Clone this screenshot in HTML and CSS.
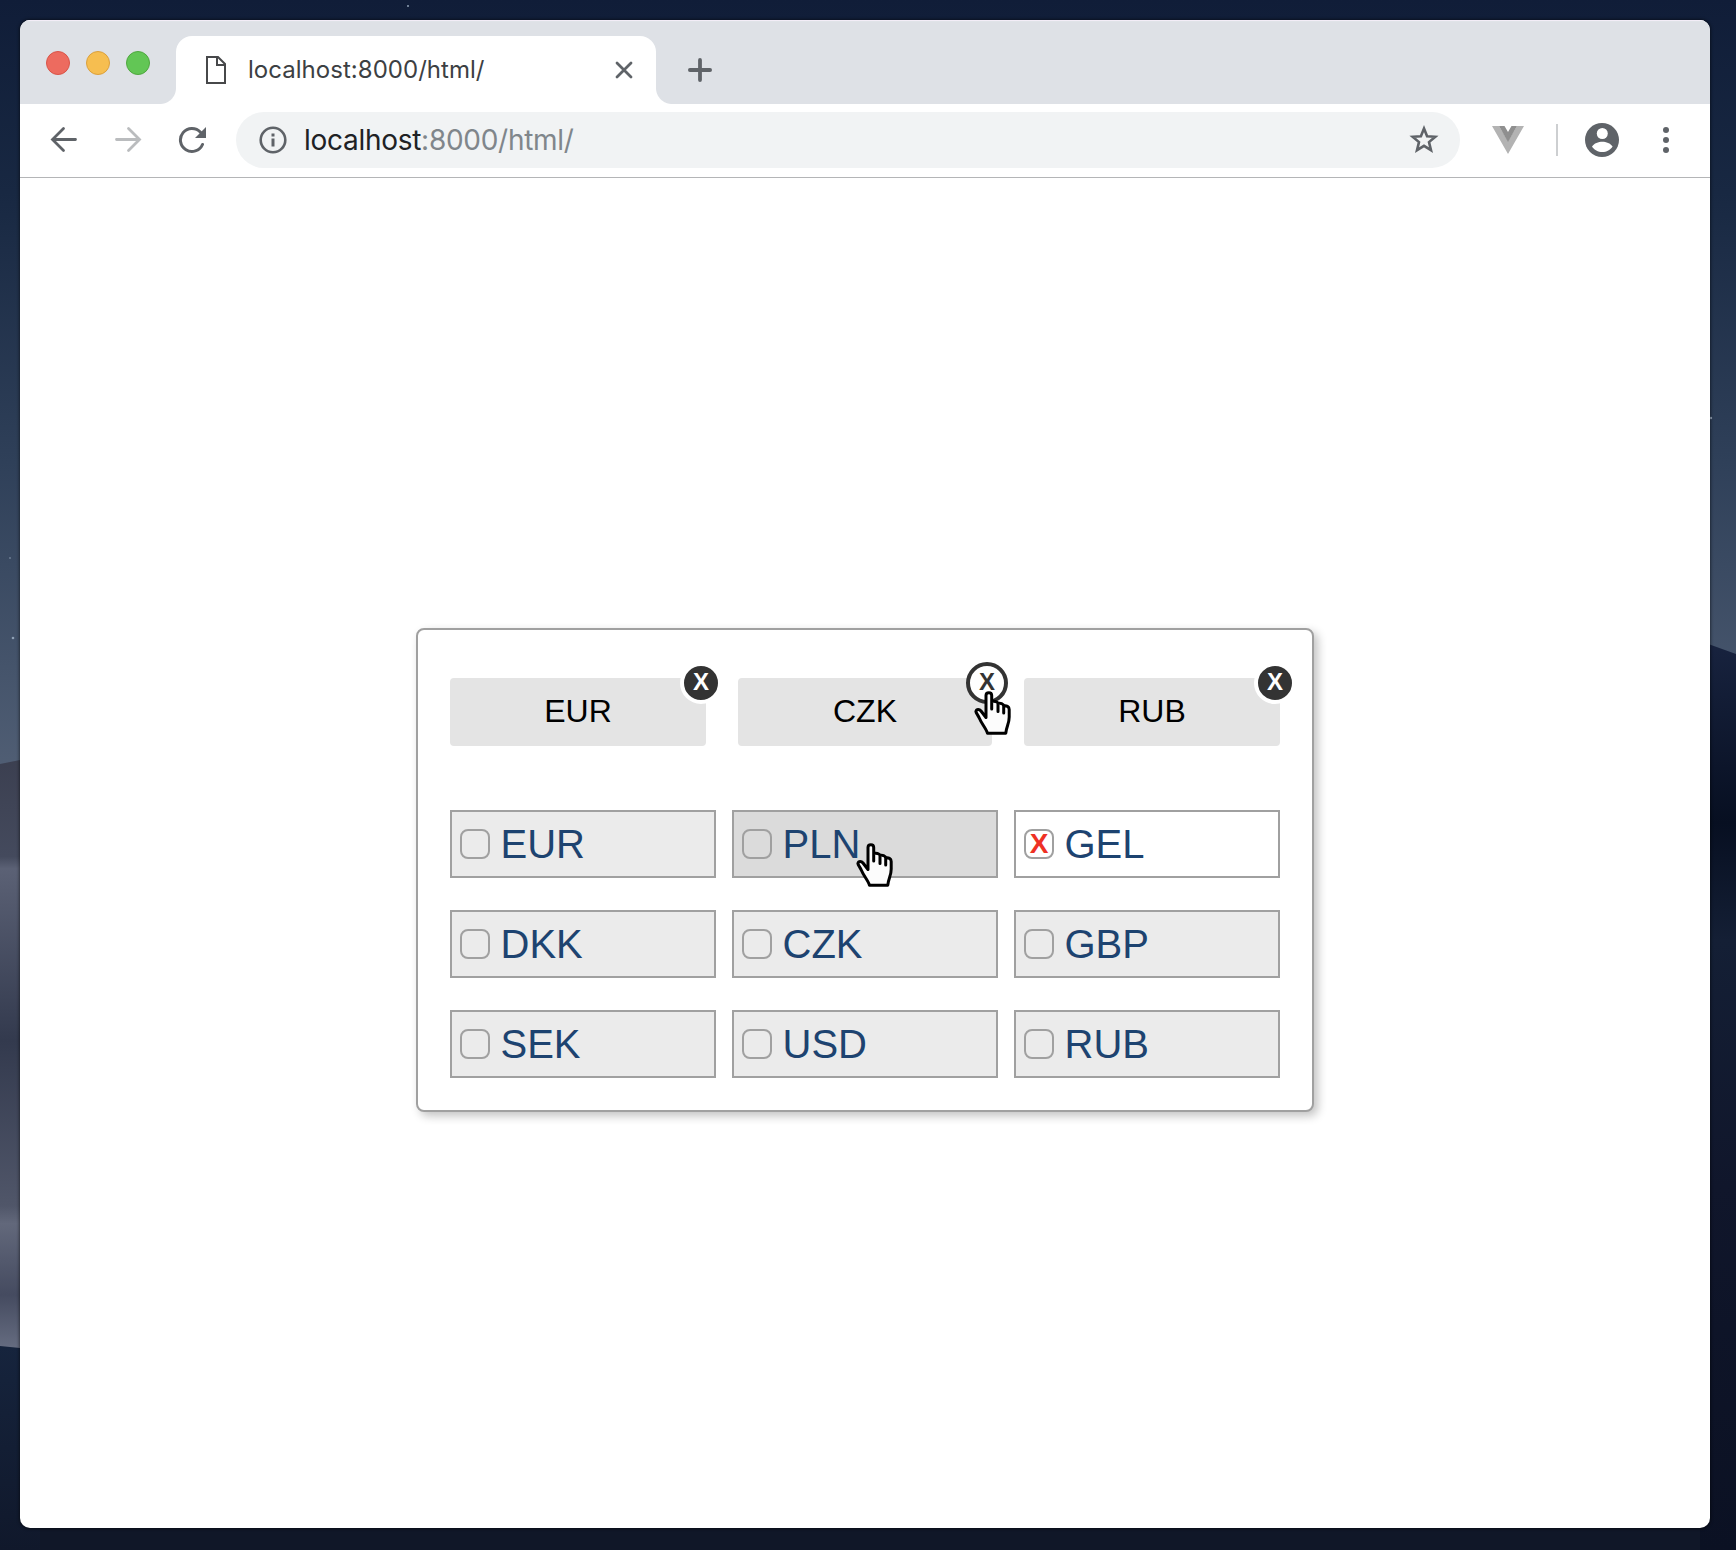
FILE: index.html
```html
<!DOCTYPE html>
<html lang="en">
<head>
<meta charset="utf-8">
<title>localhost:8000/html/</title>
<link rel="stylesheet" href="styles.css">
</head>
<body>
<svg class="wallpaper" viewBox="0 0 1736 1550" preserveAspectRatio="none" aria-hidden="true">
  <defs>
    <linearGradient id="sky" x1="0" y1="0" x2="0" y2="1">
      <stop offset="0" stop-color="#101d38"/><stop offset=".25" stop-color="#182842"/>
      <stop offset=".6" stop-color="#2f4059"/><stop offset="1" stop-color="#505e74"/>
    </linearGradient>
    <linearGradient id="dune" x1="0" y1="0" x2="0" y2="1">
      <stop offset="0" stop-color="#3b3f50"/><stop offset=".17" stop-color="#444a5d"/>
      <stop offset=".19" stop-color="#5b6175"/><stop offset=".48" stop-color="#333a4e"/>
      <stop offset=".76" stop-color="#505669"/><stop offset=".79" stop-color="#62687b"/>
      <stop offset=".91" stop-color="#454b60"/><stop offset="1" stop-color="#656c80"/>
    </linearGradient>
    <linearGradient id="shade" x1="0" y1="0" x2="0" y2="1">
      <stop offset="0" stop-color="#18233f"/><stop offset=".2" stop-color="#070f21"/>
      <stop offset=".33" stop-color="#141f35"/><stop offset=".6" stop-color="#10162b"/>
      <stop offset="1" stop-color="#0b1123"/>
    </linearGradient>
    <linearGradient id="sand" x1="0" y1="0" x2="0" y2="1">
      <stop offset="0" stop-color="#16243d"/><stop offset="1" stop-color="#10182b"/>
    </linearGradient>
  </defs>
  <rect width="1736" height="1550" fill="#101728"/>
  <rect width="1736" height="770" fill="url(#sky)"/>
  <path d="M0 764L40 756V1348H0Z" fill="url(#dune)"/>
  <path d="M0 1346L40 1350V1550H0Z" fill="url(#sand)"/>
  <path d="M1700 641L1736 654V1550H1700Z" fill="url(#shade)"/>
  <g fill="#8fa0b5"><circle cx="408" cy="6" r="1"/><circle cx="13" cy="638" r="1.3"/><circle cx="1711" cy="418" r="1.2"/><circle cx="10" cy="558" r=".8"/></g>
</svg>
<div class="window">
  <div class="tabstrip">
    <div class="lights"><i class="light red"></i><i class="light yellow"></i><i class="light green"></i></div>
    <div class="tab">
      <svg class="doc" width="20" height="28" viewBox="0 0 20 28"><path d="M1 1H12L19 8V27H1ZM11 1V9H19" fill="none" stroke="#47484a" stroke-width="2"/></svg>
      <span class="tab-title">localhost:8000/html/</span>
      <svg class="tab-close" width="18" height="18" viewBox="0 0 18 18"><path d="M2 2L16 16M16 2L2 16" stroke="#5f6368" stroke-width="2.8" stroke-linecap="round"/></svg>
    </div>
    <svg class="new-tab" width="24" height="24" viewBox="0 0 24 24"><path d="M12 1.9V22.1M1.9 12H22.1" stroke="#5f6368" stroke-width="3.8" stroke-linecap="round"/></svg>
  </div>
  <div class="toolbar">
    <svg class="nav" width="28" height="28" viewBox="0 0 28 28"><path d="M25.500 13.500H3M13.500 2.500L2.500 13.500L13.500 24.500" fill="none" stroke="#5f6368" stroke-width="2.800" stroke-linecap="round"/></svg>
    <svg class="nav" width="28" height="28" viewBox="0 0 28 28"><path d="M2.500 13.500H25M14.500 2.500L25.500 13.500L14.500 24.500" fill="none" stroke="#babcbe" stroke-width="2.800" stroke-linecap="round"/></svg>
    <svg class="nav" width="28" height="28" viewBox="0 0 28 28"><path d="M24.500 18.500A11.500 11.500 0 1 1 22.500 6.300" fill="none" stroke="#5f6368" stroke-width="3" stroke-linecap="round"/><path d="M28 1V12H17Z" fill="#5f6368"/></svg>
    <div class="omnibox">
      <svg width="28" height="28" viewBox="0 0 28 28"><circle cx="14" cy="14" r="12.300" fill="none" stroke="#5f6368" stroke-width="2.600"/><path d="M12.500 7.500h3v3h-3zM12.500 12.500h3v8h-3z" fill="#5f6368"/></svg>
      <span class="url"><b>localhost</b>:8000/html/</span>
      <svg class="star" width="30" height="30" viewBox="0 0 30 30"><path d="M15 3.500L18.100 11.200L26.300 11.800L20 17.100L22 25.200L15 20.900L8 25.200L10 17.100L3.700 11.800L11.900 11.200Z" fill="none" stroke="#5f6368" stroke-width="2.600"/></svg>
    </div>
    <svg class="vue" width="32" height="28" viewBox="0 0 32 28"><path d="M0 0H7L16 15L25 0H32L16 28Z" fill="#b3b3b3"/><path d="M7 0H12.500L16 6L19.500 0H25L16 16Z" fill="#8f8f8f"/></svg>
    <span class="divider"></span>
    <svg class="avatar" width="34" height="34" viewBox="0 0 34 34"><circle cx="17" cy="17" r="17" fill="#5f6368"/><circle cx="17.300" cy="10.500" r="5.500" fill="#fff"/><path d="M7 23.500C9 20.200 13.500 18.700 17.300 18.700S25.500 20.200 27.600 23.500C25.500 27 21.500 29 17.300 29S9 27 7 23.500Z" fill="#fff"/></svg>
    <svg class="menu" width="6" height="26" viewBox="0 0 6 26"><g fill="#5f6368"><circle cx="3" cy="3" r="3"/><circle cx="3" cy="13" r="3"/><circle cx="3" cy="23" r="3"/></g></svg>
  </div>
  <main class="page">
    <section class="panel">
      <div class="pills">
        <div class="pill">EUR<span class="remove">X</span></div>
        <div class="pill">CZK<span class="remove hover">X</span>
          <svg class="hand" width="37" height="44" viewBox="0 0 37 44"><use href="#hand"/></svg>
        </div>
        <div class="pill">RUB<span class="remove">X</span></div>
      </div>
      <div class="options">
        <div class="option"><i class="box"></i>EUR</div>
        <div class="option active"><i class="box"></i>PLN
          <svg class="hand" width="37" height="44" viewBox="0 0 37 44"><path id="hand" d="M1.900 20.500C2.600 17.500 5.500 18 7 20L12 26.500V4.500C12 .7 17.700 .7 17.700 4.500V10.500C20 10 23.500 10.500 24 12.500C26.500 12 29.500 12.700 29.700 15C32.500 14.500 35.200 15.500 35.200 18.500V26C35.200 33 32.500 35 31.800 42.200H13.500C12 37.500 7.500 32.500 5.500 27.500C4.300 24.500 2.200 22.500 1.900 20.500ZM17.700 10.500V18M24 12.500V20.500M29.700 15V22" fill="#fcfcfc" stroke="#000" stroke-width="3" stroke-linejoin="round" stroke-linecap="round"/></svg>
        </div>
        <div class="option checked"><i class="box">X</i>GEL</div>
        <div class="option"><i class="box"></i>DKK</div>
        <div class="option"><i class="box"></i>CZK</div>
        <div class="option"><i class="box"></i>GBP</div>
        <div class="option"><i class="box"></i>SEK</div>
        <div class="option"><i class="box"></i>USD</div>
        <div class="option"><i class="box"></i>RUB</div>
      </div>
    </section>
  </main>
</div>
</body>
</html>
```
FILE: styles.css
```css
* { box-sizing: border-box; }
body { margin: 0; height: 1550px; padding: 20px 26px 22px 20px; position: relative; overflow: hidden; background: #101728; font-family: "Liberation Sans", Arial, sans-serif; }
svg { display: block; flex: none; }
.wallpaper { position: absolute; left: 0; top: 0; width: 100%; height: 100%; }
.window { position: relative; height: 1508px; display: flex; flex-direction: column; background: #fff; border-radius: 10px; overflow: hidden; box-shadow: 0 0 3px 1px rgba(0,0,0,.45); }

.tabstrip { height: 84px; flex: none; display: flex; align-items: flex-start; padding: 16px 0 0 26px; background: #dee1e6; box-shadow: inset 0 2px 1px -1px #f5eff9; }
.lights { display: flex; gap: 16px; padding-top: 15px; width: 130px; }
.light { width: 24px; height: 24px; border-radius: 50%; border: 1px solid; }
.red { background: #ed6b5f; border-color: #d95448; }
.yellow { background: #f6be50; border-color: #dba03c; }
.green { background: #62c655; border-color: #4fa73f; }
.tab { position: relative; width: 480px; height: 68px; display: flex; align-items: flex-start; padding: 20px 23px 0 30px; background: #fff; border-radius: 16px 16px 0 0; }
.tab::before, .tab::after { content: ""; position: absolute; bottom: 0; width: 16px; height: 16px; }
.tab::before { left: -16px; background: radial-gradient(circle at 0 0, transparent 15.5px, #fff 16.5px); }
.tab::after { right: -16px; background: radial-gradient(circle at 100% 0, transparent 15.5px, #fff 16.5px); }
.tab-title { margin: -1px 0 0 22px; font: 24px/30px Inter, sans-serif; letter-spacing: .03px; color: #3c4043; white-space: nowrap; }
.tab-close { margin: 5px 0 0 auto; }
.new-tab { margin: 22px 0 0 32px; }

.toolbar { height: 74px; flex: none; display: flex; align-items: center; padding: 0 40px 2px 30px; border-bottom: 1px solid #b4b5b7; }
.nav { margin-right: 36px; }
.omnibox { width: 1224px; height: 56px; margin-left: -6px; display: flex; align-items: center; padding: 0 21px 0 22.5px; border-radius: 28px; background: #f1f3f4; }
.url { margin-left: 17.5px; padding-top: 1px; font: 28px/34px Inter, sans-serif; letter-spacing: -.28px; color: #80868b; white-space: nowrap; }
.url b { font-weight: 400; color: #202124; }
.star { margin-left: auto; }
.vue { margin-left: 32px; }
.divider { width: 2px; height: 32px; margin: 0 27px 0 32px; background: #cdcfd1; }
.menu { margin-left: 44px; }

.page { flex: 1; padding: 450px 396px 0; }
.panel { height: 484px; padding: 48px 32px 32px; border: 2px solid #a0a0a0; border-radius: 8px; box-shadow: 4px 4px 10px rgba(0,0,0,.24); background: #fff; }
.pills { display: grid; grid-template-columns: 256px 254px 256px; gap: 32px; margin-bottom: 64px; }
.pill { position: relative; height: 68px; line-height: 66px; text-align: center; font-size: 32px; color: #000; background: #e4e4e4; border-radius: 4px; }
.remove { position: absolute; top: -16px; right: -16px; width: 42px; height: 42px; border: 4px solid #fff; border-radius: 50%; background: #333; color: #fff; font: bold 24px/32px "Liberation Sans", Arial, sans-serif; }
.remove.hover { background: #fff; border-color: #333; color: #333; }
.options { display: grid; grid-template-columns: repeat(3, 1fr); gap: 32px 16px; }
.option { position: relative; height: 68px; display: flex; align-items: center; gap: 10.5px; padding: 0 8px; border: 2px solid #a0a0a0; background: #ebebeb; color: #1d4370; font-size: 40px; line-height: 46px; }
.option.active { background: #dbdbdb; }
.option.checked { background: #fff; }
.box { width: 30px; height: 30px; border: 2px solid #a0a0a0; border-radius: 8px; text-align: center; color: #ee3124; font: bold 28px/26px "Liberation Sans", Arial, sans-serif; }
.hand { position: absolute; z-index: 2; }
.pill .hand { right: -19px; top: 13px; }
.option .hand { left: 122px; top: 31px; }
```
